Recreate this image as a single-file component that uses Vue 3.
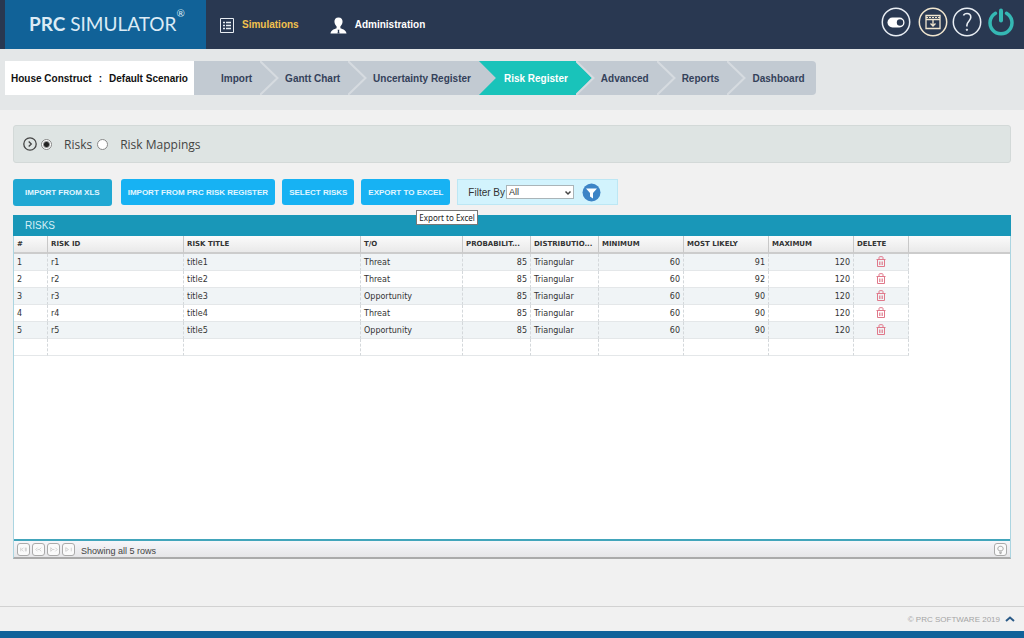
<script setup>
import { ref } from 'vue'

const steps = ['Import', 'Gantt Chart', 'Uncertainty Register', 'Risk Register', 'Advanced', 'Reports', 'Dashboard']
const activeStep = ref('Risk Register')
const view = ref('risks')
const filter = ref('All')

const columns = [
  { key: 'no', label: '#', cls: 'c-no' },
  { key: 'id', label: 'RISK ID', cls: 'c-id' },
  { key: 'title', label: 'RISK TITLE', cls: 'c-title' },
  { key: 'type', label: 'T/O', cls: 'c-type' },
  { key: 'prob', label: 'PROBABILIT...', cls: 'c-mid', num: true },
  { key: 'dist', label: 'DISTRIBUTIO...', cls: 'c-mid' },
  { key: 'min', label: 'MINIMUM', cls: 'c-num', num: true },
  { key: 'likely', label: 'MOST LIKELY', cls: 'c-num', num: true },
  { key: 'max', label: 'MAXIMUM', cls: 'c-num', num: true },
]
const rows = [
  ['Threat', 91], ['Threat', 92], ['Opportunity', 90], ['Threat', 90], ['Opportunity', 90],
].map(([type, likely], i) => ({
  no: i + 1, id: `r${i + 1}`, title: `title${i + 1}`, type, prob: 85, dist: 'Triangular', min: 60, likely, max: 120,
}))
const pagers = [
  { label: 'First page', d: 'M3 4v4M6 4L4 6l2 2M8 4v4M9 4v4' },
  { label: 'Previous page', d: 'M5 4L3 6l2 2M5 6h2M9 4L7 6l2 2' },
  { label: 'Next page', d: 'M3 4v4l2-2zM8 4l2 2-2 2M5 6h2' },
  { label: 'Last page', d: 'M3 4v4l3-2zM9 4v4' },
]
</script>

<template>
  <div class="page">
    <header class="topbar">
      <a href="#" class="logo"><b>PRC</b>&nbsp;SIMULATOR<sup>®</sup></a>
      <nav class="menu">
        <a href="#" class="menu-item current">
          <svg width="14" height="15" viewBox="0 0 14 15" fill="none" stroke="#e8edf2">
            <path d="M.5.5h13v14H.5z" />
            <path d="M3 4.500h2M6 4.500h5M3 7.500h2M6 7.500h5M3 10.500h2M6 10.500h5" stroke-width="1.300" />
          </svg>
          Simulations
        </a>
        <a href="#" class="menu-item">
          <svg width="17" height="17" viewBox="0 0 18 17" fill="#fff">
            <path d="M9 0c3 0 4.500 2 4.300 4.600C13.200 7 12 8.500 11 9.500v2c2 1 6 1.500 6.500 5.500H.5C1 13 5 12.500 7 11.500v-2C6 8.500 4.800 7 4.700 4.600 4.500 2 6 0 9 0z" />
            <path d="M8 13h2l-.4 1.300.5 2.700H7.900l.5-2.700z" fill="#293851" />
          </svg>
          Administration
        </a>
      </nav>
      <div class="tools">
        <button type="button" aria-label="Toggle">
          <svg width="30" height="30" viewBox="0 0 30 30">
            <circle cx="15" cy="15" r="13.700" fill="none" stroke="#e9eef4" stroke-width="1.500" />
            <rect x="6.500" y="10.500" width="17" height="10" rx="5" fill="#fff" />
            <circle cx="19" cy="15.500" r="3.200" fill="#293851" />
          </svg>
        </button>
        <button type="button" aria-label="Download" class="gap">
          <svg width="30" height="30" viewBox="0 0 30 30" fill="none" stroke="#f1e6cf">
            <circle cx="15" cy="15" r="13.700" stroke-width="1.500" />
            <path d="M8 8.500h14v13H8zM8 12.500h14" stroke-width="1.300" />
            <path d="M8 10.500h14" stroke-dasharray="2 1" />
            <path d="M15 12.500v6.500M12.500 16.500l2.500 2.500 2.500-2.500" stroke-width="1.300" />
          </svg>
        </button>
        <button type="button" aria-label="Help">
          <svg width="30" height="30" viewBox="0 0 30 30" fill="none" stroke="#e9eef4">
            <circle cx="15" cy="15" r="13.700" stroke-width="1.500" />
            <path d="M11.500 8.500C12 7 13.500 6.500 15 6.500c2.300 0 3.800 1.500 3.800 3.800 0 3.800-3.900 4-3.900 8v1.200" stroke-width="1.600" />
            <circle cx="14.900" cy="22.800" r=".7" fill="#e9eef4" />
          </svg>
        </button>
        <button type="button" aria-label="Log out">
          <svg width="30" height="30" viewBox="0 0 30 30" fill="none" stroke="#35b8b4" stroke-linecap="round">
            <path d="M9.500 6.300a11 11 0 1 0 11 0" stroke-width="3.500" />
            <path d="M15 3.500v10" stroke-width="4" />
          </svg>
        </button>
      </div>
    </header>

    <div class="crumbs">
      <div class="scenario"><span>House Construct</span><span>:</span><span>Default Scenario</span></div>
      <ol class="steps">
        <li v-for="(step, i) in steps" :key="step" :class="{ active: step === activeStep }">
          <svg v-if="i" class="sep" width="19" height="34" viewBox="0 0 19 34" fill="none">
            <path d="M0 0l17.500 17L0 34" stroke="#d6dbe0" stroke-width="2" />
          </svg>
          <a href="#" @click.prevent="activeStep = step">{{ step }}</a>
        </li>
      </ol>
    </div>

    <main class="content">
      <div class="switcher">
        <svg width="14" height="14" viewBox="0 0 14 14" fill="none" stroke="#444" stroke-width="1.300">
          <circle cx="7" cy="7" r="6.200" /><path d="M5.700 4.500L8.300 7 5.700 9.500" />
        </svg>
        <input id="v-risks" v-model="view" type="radio" name="view" value="risks"><label for="v-risks">Risks</label>
        <input id="v-map" v-model="view" type="radio" name="view" value="map"><label for="v-map">Risk Mappings</label>
      </div>

      <div class="actions">
        <button type="button" class="btn primary">IMPORT FROM XLS</button>
        <button type="button" class="btn">IMPORT FROM PRC RISK REGISTER</button>
        <button type="button" class="btn">SELECT RISKS</button>
        <div class="tip-host">
          <button type="button" class="btn" aria-describedby="tip">EXPORT TO EXCEL</button>
          <span id="tip" class="tip" role="tooltip">Export to Excel</span>
        </div>
        <div class="filter">
          <label for="filter">Filter By</label>
          <span class="select">
            <select id="filter" v-model="filter"><option>All</option><option>Threat</option><option>Opportunity</option></select>
            <svg width="8" height="6" viewBox="0 0 8 6" fill="none" stroke="#444" stroke-width="1.500"><path d="M1.500 1.500L4 4l2.500-2.500" /></svg>
          </span>
          <button type="button" class="funnel" aria-label="Apply filter">
            <svg width="19" height="19" viewBox="0 0 19 19">
              <circle cx="9.500" cy="9.500" r="9" fill="#3d84c6" />
              <path d="M4 5.500h11l-4 4.500v5.500L8 13.500V10z" fill="#fff" />
            </svg>
          </button>
        </div>
      </div>

      <section class="grid">
        <h2>RISKS</h2>
        <div class="grid-body">
          <table>
            <colgroup>
              <col v-for="c in columns" :key="c.key" :class="c.cls">
              <col class="c-del"><col>
            </colgroup>
            <thead>
              <tr><th v-for="c in columns" :key="c.key">{{ c.label }}</th><th>DELETE</th><th class="rest"></th></tr>
            </thead>
            <tbody>
              <tr v-for="r in rows" :key="r.no">
                <td v-for="c in columns" :key="c.key" :class="{ num: c.num }">{{ r[c.key] }}</td>
                <td class="del">
                  <button type="button" :aria-label="`Delete ${r.title}`">
                    <svg width="10" height="12" viewBox="0 0 10 12" fill="none" stroke="#e0788a">
                      <path d="M.5 3.500h9M1.500 3.500v7h7v-7M3 3V1.500Q3 .7 4 .7h2q1 0 1 .8V3" />
                      <path d="M3.500 5.500v3.500M5 5.500v3.500M6.500 5.500v3.500" stroke-width=".8" />
                    </svg>
                  </button>
                </td>
                <td class="rest"></td>
              </tr>
              <tr><td v-for="n in 10" :key="n"></td><td class="rest"></td></tr>
            </tbody>
          </table>
        </div>
        <div class="grid-foot">
          <button v-for="p in pagers" :key="p.label" type="button" class="pager" :aria-label="p.label">
            <svg width="12" height="12" viewBox="0 0 12 12" fill="none" stroke="#c4c4c4" stroke-width=".8"><path :d="p.d" /></svg>
          </button>
          <span>Showing all 5 rows</span>
          <button type="button" class="pager hint" aria-label="Hints">
            <svg width="12" height="12" viewBox="0 0 12 12" fill="none" stroke="#999">
              <path d="M4.500 7.500C2 5.500 3 2.500 6 2.500s4 3 1.500 5zM4.500 9h3M5 10.500h2" />
            </svg>
          </button>
        </div>
      </section>
    </main>

    <footer class="foot">
      <span>© PRC SOFTWARE 2019</span>
      <a href="#" aria-label="Back to top">
        <svg width="10" height="6" viewBox="0 0 10 6" fill="none" stroke="#2b5b88" stroke-width="2"><path d="M1 5l4-3.500L9 5" /></svg>
      </a>
    </footer>
  </div>
</template>

<style>
body { margin: 0; background: #f1f1f1; }
</style>

<style scoped>
* { box-sizing: border-box; }
.page { min-height: 100vh; display: flex; flex-direction: column; font-family: "Liberation Sans", Arial, sans-serif; color: #333; }
button { font-family: inherit; padding: 0; border: 0; background: none; }
svg { display: block; flex: none; }
a { color: inherit; text-decoration: none; }

.topbar { display: flex; height: 49px; padding-left: 5px; background: #293851; }
.logo { display: flex; align-items: center; width: 201px; padding-left: 24px; padding-bottom: 2px; background: #116298; color: #dcebf5; font: 400 19px Lato, sans-serif; white-space: nowrap; }
.logo b { font-weight: 700; }
.logo sup { align-self: flex-start; margin-top: 7px; font-size: 10px; line-height: 12px; }
.menu { display: flex; gap: 31px; padding-left: 14px; height: 48px; }
.menu-item { display: flex; align-items: center; gap: 8px; color: #fff; font-size: 10px; font-weight: 700; }
.menu-item svg { margin-top: 2px; }
.menu-item.current { color: #f2c14e; }
.tools { display: flex; align-items: center; margin-left: auto; padding: 0 8px 6px 0; gap: 4px; }
.tools .gap { margin-left: 3px; }

.crumbs { display: flex; height: 61px; padding: 12px 5px 0; background: #e4e7e8; }
.scenario { display: flex; align-items: center; justify-content: space-between; width: 189px; height: 34px; padding: 0 6px; background: #fff; color: #111; font-size: 10px; font-weight: 700; }
.steps { display: flex; height: 34px; margin: 0; padding: 0 3px 0 2px; list-style: none; background: #c2cad2; border-radius: 0 4px 4px 0; font-size: 10px; font-weight: 700; color: #34415a; }
.steps li { position: relative; display: flex; align-items: center; padding: 0 8px 0 25px; white-space: nowrap; }
.steps a { position: relative; }
.sep { position: absolute; left: 0; top: 0; }
.steps .active { color: #fff; }
.steps .active .sep { display: none; }
.steps .active::before { content: ""; position: absolute; inset: 0 -16px 0 0; background: #19c3ba; clip-path: polygon(0 0, calc(100% - 16px) 0, 100% 50%, calc(100% - 16px) 100%, 0 100%, 17px 50%); }

.content { flex: 1; display: flex; flex-direction: column; padding: 15px 13px 47px; }
.switcher { display: flex; align-items: center; height: 38px; padding: 0 9px; background: #dee4e3; border: 1px solid #d3d9d8; border-radius: 3px; font: 12px "Open Sans", sans-serif; color: #444; }
.switcher input { appearance: none; width: 11px; height: 11px; margin: 0 12px 0 4px; border: 1px solid #888; border-radius: 50%; background: #fff; }
.switcher input:checked { background: radial-gradient(circle, #222 2px, #fff 4px); }
.switcher label { margin-right: 1px; }

.actions { display: flex; align-items: flex-start; gap: 7px; margin-top: 16px; height: 36px; }
.btn { display: block; height: 26px; padding: 0 7px; border-radius: 3px; background: #17b2f3; color: #e2f6ff; font-size: 8px; font-weight: 700; white-space: nowrap; }
.primary { height: 27px; margin-right: 2px; padding: 0 12px; background: #20a8d3; }
.tip-host { position: relative; }
.tip { position: absolute; z-index: 1; left: 55px; top: 31px; height: 15px; padding: 0 2px; border: 1px solid #777; background: #fff; color: #222; font: 8px/13px "Noto Sans", sans-serif; white-space: nowrap; }
.filter { display: flex; align-items: center; width: 161px; height: 26px; padding-left: 10px; background: #d2f3fd; border: 1px solid #bce7f4; font-size: 10px; }
.select { position: relative; margin: 0 8px 0 1px; }
.select select { display: block; appearance: none; width: 68px; height: 14px; padding: 0 2px; border: 1px solid #aab4b8; border-radius: 0; background: #fff; color: #333; font: 9px/12px "Liberation Sans", Arial, sans-serif; }
.select svg { position: absolute; right: 2px; top: 5px; pointer-events: none; }

.grid { flex: 1; display: flex; flex-direction: column; border: 1px solid #abd5e1; border-top: 0; border-bottom: 2px solid #aaa; background: #fff; }
.grid h2 { margin: 0 -1px; height: 21px; padding-left: 12px; background: #1997b8; color: #d7eff6; font-size: 10px; font-weight: 400; line-height: 21px; }
.grid-body { flex: 1; border-bottom: 2px solid #42a5bb; }
table { width: 100%; table-layout: fixed; border-collapse: separate; border-spacing: 0; font: 8px "DejaVu Sans", Verdana, sans-serif; color: #333; }
.c-no { width: 34px; }
.c-id { width: 136px; }
.c-title { width: 177px; }
.c-type { width: 102px; }
.c-mid { width: 68px; }
.c-num { width: 85px; }
.c-del { width: 55px; }
th, td { height: 17px; padding: 1px 3px 0; border-right: 1px dashed #d4d8db; border-bottom: 1px solid #e4e7e9; text-align: left; white-space: nowrap; }
th { height: 18px; padding-top: 0; font-size: 7px; border-right: 1px solid #c8c8c8; border-bottom: 2px solid #ccc; background: linear-gradient(#fbfbfb, #e9e9e9); }
tbody tr:nth-child(odd) td { background: #f0f4f6; }
tbody tr:nth-child(even) td { background: #fff; }
td.rest, th.rest { border-right: 0; }
tbody tr td.rest { border-bottom: 0; background: #fff; }
td.num { text-align: right; }
td.del { padding: 0; }
.del button { display: block; margin: 0 auto; }

.grid-foot { display: flex; align-items: center; gap: 2px; height: 16px; padding: 1px 3px 0; background: linear-gradient(#f6f6fa, #e6e6e8); font-size: 9px; color: #444; }
.grid-foot span { margin: 2px 0 0 4px; }
.pager { width: 13px; height: 13px; border: 1px solid #aaa; border-radius: 3px; background: #fafafa; overflow: hidden; }
.pager svg { width: 11px; height: 11px; }
.hint { margin-left: auto; }

.foot { display: flex; align-items: center; justify-content: flex-end; gap: 5px; height: 32px; padding: 0 9px 0 0; border-top: 1px solid #d2d2d2; border-bottom: 7px solid #10629a; font-size: 8px; color: #a5a5a5; }
</style>
